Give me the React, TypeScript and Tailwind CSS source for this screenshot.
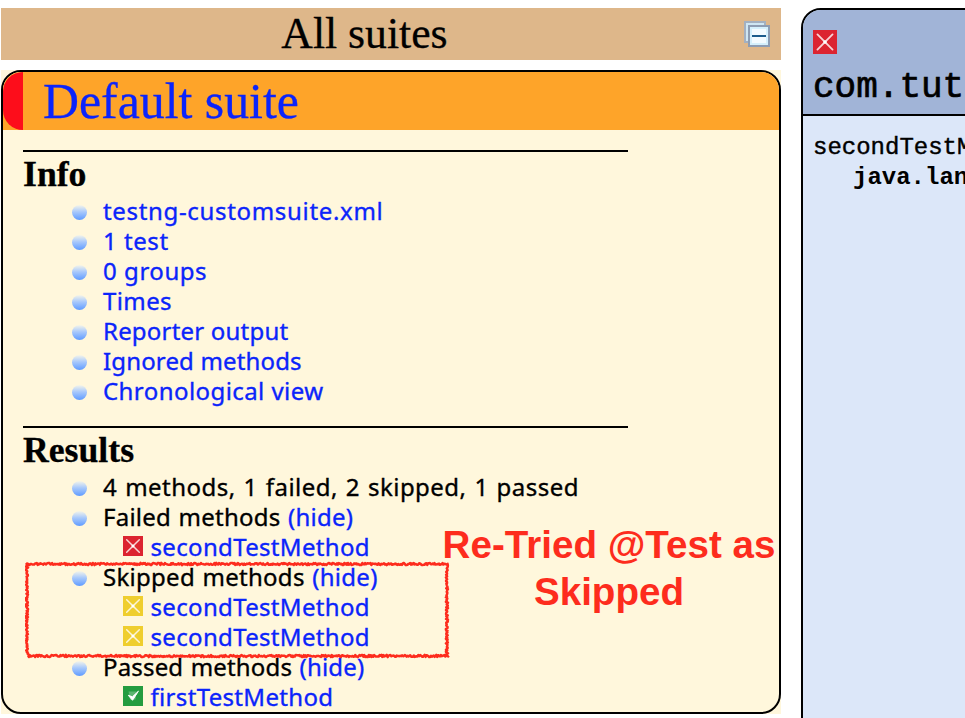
import type { ReactNode } from "react";

const RED = "#dc2430";
const YELLOW = "#efce2e";

function CrossIcon({ size, color }: { size: number; color: string }) {
  return (
    <svg width={size} height={size} viewBox="0 0 20 20" className="block shrink-0">
      <rect width="20" height="20" fill={color} />
      <path d="M3.7 3.7 16.3 16.3M16.3 3.7 3.7 16.3" stroke="#fff" strokeOpacity=".8" strokeWidth="1.5" strokeLinecap="round" />
      <circle cx="10" cy="10" r="1.5" fill="#fff" />
    </svg>
  );
}

function CheckIcon() {
  return (
    <svg width="20" height="20" viewBox="0 0 20 20" className="block shrink-0">
      <rect width="20" height="20" fill="#249c40" />
      <path d="M5.5 5.5h8l-1 8H7z" fill="#fff" fillOpacity=".25" />
      <path d="M5.3 9.3 9.5 14.3 15.4 5.2 9.4 10.8z" fill="#fff" stroke="#fff" strokeWidth="1" strokeLinejoin="round" />
    </svg>
  );
}

function CollapseIcon() {
  return (
    <svg width="26" height="26" viewBox="0 0 26 26" className="block">
      <rect x="0" y="0" width="22" height="22" fill="#a3b0c0" />
      <rect x="2" y="2" width="18" height="18" fill="#cfe6f2" />
      <rect x="4" y="4" width="22" height="22" fill="#8d9db3" />
      <rect x="6" y="6" width="18" height="18" fill="#d5f0fc" />
      <rect x="8" y="8" width="14" height="14" fill="#f3fbff" />
      <rect x="8" y="14" width="14" height="2" fill="#1c5c8c" />
    </svg>
  );
}

function Bullet() {
  return (
    <span className="mr-4 ml-[49px] h-[15px] w-[15px] shrink-0 rounded-full bg-linear-to-b from-[#f6f5e8] via-[#a9c9fb] via-45% to-[#5f9bff]" />
  );
}

function Item({ children, tracking = "tracking-[0.4px]" }: { children: ReactNode; tracking?: string }) {
  return (
    <li className="flex h-[30px] items-center whitespace-pre">
      <Bullet />
      <span className={`-mt-[2px] ${tracking}`}>{children}</span>
    </li>
  );
}

function Method({ icon, name }: { icon: ReactNode; name: string }) {
  return (
    <li className="flex h-[30px] items-center gap-[7.5px] pl-[100px] tracking-[0.33px]">
      <span className="-mt-[4px]">{icon}</span>
      <a className="-mt-[2px] text-[#0b24fb]">{name}</a>
    </li>
  );
}

const Link = ({ children }: { children: ReactNode }) => <a className="text-[#0b24fb]">{children}</a>;

// Deterministic noise keeps the crayon outline stable between renders.
function noise(n: number) {
  const v = Math.sin(n * 127.1) * 43758.5453;
  return v - Math.floor(v) - 0.5;
}

function roughLine(x1: number, y1: number, x2: number, y2: number, seed: number) {
  const horizontal = y1 === y2;
  const steps = Math.floor(Math.max(Math.abs(x2 - x1), Math.abs(y2 - y1)) / 0.9);
  let d = "";
  for (let i = 0; i <= steps; i++) {
    const t = i / steps;
    const j = noise(i + seed) * 2.2;
    const x = x1 + (x2 - x1) * t + (horizontal ? 0 : j);
    const y = y1 + (y2 - y1) * t + (horizontal ? j : 0);
    d += `${i ? "L" : "M"}${x.toFixed(2)} ${y.toFixed(2)}`;
  }
  return d;
}

function CrayonBox() {
  const d = [
    roughLine(1, 3, 423, 3, 11),
    roughLine(422, 2, 422, 95, 503),
    roughLine(3, 95, 424, 95, 907),
    roughLine(2, 2, 2, 94, 1301),
  ].join("");
  return (
    <svg width="428" height="99" viewBox="0 0 428 99" className="absolute top-[489px] left-[22px]">
      <path d={d} fill="none" stroke="#fd2c1d" strokeWidth="2.5" strokeLinejoin="round" />
    </svg>
  );
}

function SectionTitle({ children }: { children: ReactNode }) {
  return (
    <h3 className="h-[45px] w-[605px] border-t-2 border-black pt-[2px] font-['Liberation_Serif',serif] text-[35.7px] leading-[40px] font-bold tracking-normal [-webkit-text-stroke:0.3px]">
      {children}
    </h3>
  );
}

export default function App() {
  return (
    <div className="flex h-[718px] w-[965px] overflow-hidden bg-white pt-2 pl-px text-black">
      <div className="w-[780px] shrink-0">
        <header className="flex h-[52px] items-center bg-[#deb78a] pr-[11px]">
          <h1 className="-mt-[2px] flex-1 pr-[16px] text-center font-['Liberation_Serif',serif] text-[43.7px] leading-[50px] [-webkit-text-stroke:0.3px]">All suites</h1>
          <CollapseIcon />
        </header>

        <main className="mt-[10px] h-[644px] bg-[#fff7dc]">
          <div className="relative h-[644px] rounded-[20px] border-2 border-black">
            <div className="flex h-[58px] overflow-hidden rounded-t-[18px] bg-[#fea429]">
              <div className="w-5 rounded-l-[20px] bg-[#fd0d1b]" />
              <h2 className="pl-5 font-['Liberation_Serif',serif] text-[49.8px] leading-[59px] text-[#0b24fb] [-webkit-text-stroke:0.3px]">Default suite</h2>
            </div>

            <div className="pt-5 pl-5 font-['Noto_Sans',sans-serif] text-[24px] leading-[30px] [-webkit-text-stroke:0.35px]">
              <section>
                <SectionTitle>Info</SectionTitle>
                <ul className="mt-[2px]">
                  <Item tracking="tracking-[0.67px]"><Link>testng-customsuite.xml</Link></Item>
                  <Item tracking="tracking-[0.55px]"><Link>1 test</Link></Item>
                  <Item tracking="tracking-[0.55px]"><Link>0 groups</Link></Item>
                  <Item><Link>Times</Link></Item>
                  <Item tracking="tracking-[0.2px]"><Link>Reporter output</Link></Item>
                  <Item tracking="tracking-[0.15px]"><Link>Ignored methods</Link></Item>
                  <Item tracking="tracking-[0.43px]"><Link>Chronological view</Link></Item>
                </ul>
              </section>
              <section className="mt-[19px]">
                <SectionTitle>Results</SectionTitle>
                <ul className="mt-[2px]">
                  <Item tracking="tracking-[0.48px] [word-spacing:1.2px]">4 methods, 1 failed, 2 skipped, 1 passed</Item>
                  <Item tracking="tracking-[0.25px] [word-spacing:1px]">Failed methods <Link>(hide)</Link></Item>
                  <Method icon={<CrossIcon size={20} color={RED} />} name="secondTestMethod" />
                  <Item tracking="tracking-[0.28px] [word-spacing:1px]">Skipped methods <Link>(hide)</Link></Item>
                  <Method icon={<CrossIcon size={20} color={YELLOW} />} name="secondTestMethod" />
                  <Method icon={<CrossIcon size={20} color={YELLOW} />} name="secondTestMethod" />
                  <Item tracking="tracking-[0.17px] [word-spacing:1px]">Passed methods <Link>(hide)</Link></Item>
                  <Method icon={<CheckIcon />} name="firstTestMethod" />
                </ul>
              </section>
            </div>

            <CrayonBox />
            <p className="absolute top-[449px] left-[436px] w-[340px] text-center font-['Liberation_Sans',sans-serif] text-[38.6px] leading-[47px] font-bold whitespace-nowrap text-[#fd2c1d]">
              Re-Tried @Test as
              <br />
              Skipped
            </p>
          </div>
        </main>
      </div>

      <aside className="ml-5 h-[740px] w-[400px] shrink-0 rounded-tl-[20px] border-2 border-black bg-[#dce7f9] font-['Liberation_Mono',monospace] whitespace-nowrap">
        <div className="h-[106px] rounded-tl-[18px] border-b-2 border-black bg-[#a1b4d7] pt-5 pl-[10px]">
          <CrossIcon size={24} color={RED} />
          <div className="mt-[12px] text-[36px] leading-[44px] [-webkit-text-stroke:0.7px]">com.tut</div>
        </div>
        <div className="pt-[17px] pl-[10px] text-[24px] leading-[30px]">
          <div className="[-webkit-text-stroke:0.4px]">secondTestM</div>
          <div className="pl-10 font-bold">java.lan</div>
        </div>
      </aside>
    </div>
  );
}
